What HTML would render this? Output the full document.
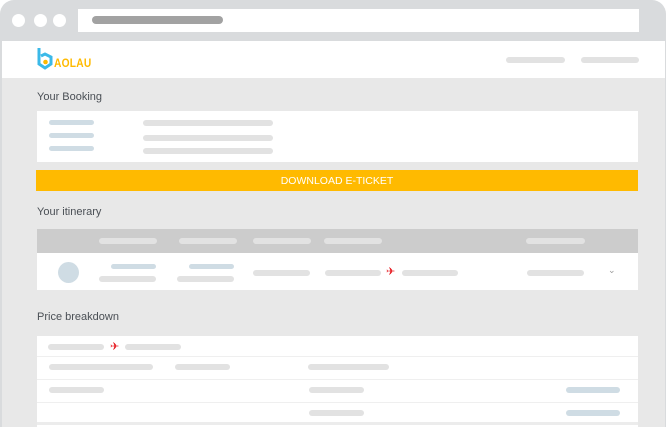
<!DOCTYPE html><html><head><style>
*{margin:0;padding:0;box-sizing:border-box}
body{width:667px;height:427px;background:#fff;position:relative;overflow:hidden;font-family:"Liberation Sans",sans-serif}
div{position:absolute}
.b{height:6px;border-radius:3px;background:#e2e2e2}
.bl{height:5px;border-radius:3px;background:#cfdce4}
.t{font-size:11px;color:#4a4f55}
</style></head><body>
<div style="left:0;top:0;width:666px;height:427px;background:#d9dbdd;border-radius:14px 14px 0 0"></div>
<div style="left:12px;top:14px;width:13px;height:13px;border-radius:50%;background:#fff"></div>
<div style="left:34px;top:14px;width:13px;height:13px;border-radius:50%;background:#fff"></div>
<div style="left:53px;top:14px;width:13px;height:13px;border-radius:50%;background:#fff"></div>
<div style="left:78px;top:9px;width:561px;height:23px;background:#fff"></div>
<div style="left:92px;top:16px;width:131px;height:8px;border-radius:4px;background:#a2a2a2"></div>
<div style="left:2px;top:41px;width:663px;height:37px;background:#fff"></div>
<svg style="position:absolute;left:37px;top:47px" width="16" height="24" viewBox="0 0 16 24"><path d="M2 1V17l6 4 6-4v-7l-6-3-4 2" fill="none" stroke="#3bb9e8" stroke-width="3"/><circle cx="8.5" cy="15" r="2.3" fill="#ffba00"/></svg>
<div style="left:54px;top:56px;font-size:12px;font-weight:bold;color:#ffba00;letter-spacing:0.3px;transform:scaleX(0.85);transform-origin:left">AOLAU</div>
<div class="b" style="left:506px;top:57px;width:59px"></div>
<div class="b" style="left:581px;top:57px;width:58px"></div>
<div style="left:2px;top:78px;width:663px;height:349px;background:#e8e8e8"></div>
<div class="t" style="left:37px;top:91px">Your Booking</div>
<div style="left:37px;top:111px;width:601px;height:51px;background:#fff"></div>
<div class="bl" style="left:49px;top:120px;width:45px"></div>
<div class="bl" style="left:49px;top:133px;width:45px"></div>
<div class="bl" style="left:49px;top:146px;width:45px"></div>
<div class="b" style="left:143px;top:120px;width:130px"></div>
<div class="b" style="left:143px;top:135px;width:130px"></div>
<div class="b" style="left:143px;top:148px;width:130px"></div>
<div style="left:36px;top:170px;width:602px;height:21px;background:#ffba00;color:#fff;font-size:10.5px;text-align:center;line-height:23px">DOWNLOAD E-TICKET</div>
<div class="t" style="left:37px;top:206px">Your itinerary</div>
<div style="left:37px;top:229px;width:601px;height:24px;background:#cccccc"></div>
<div class="b" style="left:99px;top:238px;width:58px"></div>
<div class="b" style="left:179px;top:238px;width:58px"></div>
<div class="b" style="left:253px;top:238px;width:58px"></div>
<div class="b" style="left:324px;top:238px;width:58px"></div>
<div class="b" style="left:526px;top:238px;width:59px"></div>
<div style="left:37px;top:253px;width:601px;height:37px;background:#fff"></div>
<div style="left:58px;top:262px;width:21px;height:21px;border-radius:50%;background:#cfdce4"></div>
<div class="bl" style="left:111px;top:264px;width:45px"></div>
<div class="b" style="left:99px;top:276px;width:57px"></div>
<div class="bl" style="left:189px;top:264px;width:45px"></div>
<div class="b" style="left:177px;top:276px;width:57px"></div>
<div class="b" style="left:253px;top:270px;width:57px"></div>
<div class="b" style="left:325px;top:270px;width:56px"></div>
<div style="left:386px;top:265px;color:#e8262c;font-size:11px">✈</div>
<div class="b" style="left:402px;top:270px;width:56px"></div>
<div class="b" style="left:527px;top:270px;width:57px"></div>
<div style="left:608px;top:265px;color:#999;font-size:9px">⌄</div>
<div class="t" style="left:37px;top:311px">Price breakdown</div>
<div style="left:37px;top:336px;width:601px;height:91px;background:#fff"></div>
<div style="left:37px;top:356px;width:601px;height:1px;background:#efefef"></div>
<div style="left:37px;top:379px;width:601px;height:1px;background:#efefef"></div>
<div style="left:37px;top:402px;width:601px;height:1px;background:#efefef"></div>
<div style="left:37px;top:422px;width:601px;height:3px;background:#ececec"></div>
<div class="b" style="left:48px;top:344px;width:56px"></div>
<div style="left:110px;top:340px;color:#e8262c;font-size:11px">✈</div>
<div class="b" style="left:125px;top:344px;width:56px"></div>
<div class="b" style="left:49px;top:364px;width:104px"></div>
<div class="b" style="left:175px;top:364px;width:55px"></div>
<div class="b" style="left:308px;top:364px;width:81px"></div>
<div class="b" style="left:49px;top:387px;width:55px"></div>
<div class="b" style="left:309px;top:387px;width:55px"></div>
<div class="bl" style="left:566px;top:387px;width:54px;height:6px"></div>
<div class="b" style="left:309px;top:410px;width:55px"></div>
<div class="bl" style="left:566px;top:410px;width:54px;height:6px"></div>
</body></html>
